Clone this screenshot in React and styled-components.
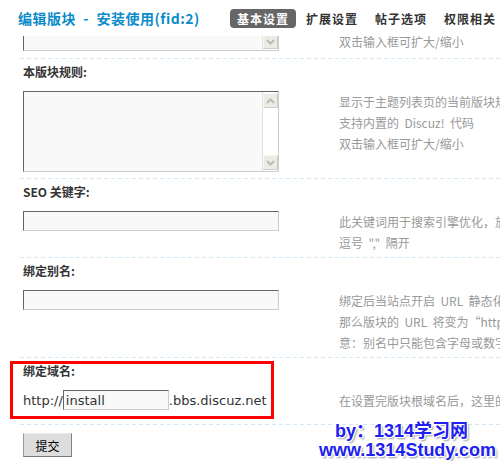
import React from "react";
import styled, { createGlobalStyle } from "styled-components";

const GlobalStyle = createGlobalStyle`
  html, body { margin: 0; padding: 0; background: #fff; overflow: hidden; }
  body {
    font-family: "Noto Sans CJK SC", "DejaVu Sans", sans-serif;
    font-size: 12px;
    color: #333;
  }
`;

const Page = styled.div`
  position: relative;
  width: 500px;
  height: 461px;
  overflow: hidden;
`;

const Header = styled.div`
  display: flex;
  align-items: center;
  height: 36px;
  padding-left: 18px;
`;

const Title = styled.h1`
  margin: 0;
  width: 212px;
  flex: none;
  font-size: 14px;
  line-height: 16px;
  font-weight: bold;
  letter-spacing: 0.5px;
  color: #0b8bca;
  white-space: pre;
`;

const Tabs = styled.nav`
  display: flex;
  gap: 3px;
`;

const Tab = styled.span`
  display: block;
  flex: none;
  width: 66px;
  height: 19px;
  box-sizing: border-box;
  padding-left: 7px;
  line-height: 19px;
  border-radius: 4px;
  font-size: 12px;
  font-weight: bold;
  letter-spacing: 1px;
  white-space: nowrap;
  background: ${(p) => (p.$active ? "#666" : "transparent")};
  color: ${(p) => (p.$active ? "#fff" : "#333")};
`;

const Content = styled.div`
  padding-left: 23px;
`;

const Separator = styled.div`
  height: 1px;
  margin-left: -3px;
  background: repeating-linear-gradient(
    to right,
    #d2e8f6 0 4px,
    transparent 4px 7px
  );
`;

const Row = styled.div`
  display: grid;
  grid-template-columns: 316px auto;
  padding-bottom: ${(p) => p.$pb ?? 4}px;
  margin-top: ${(p) => p.$mt ?? 0}px;
`;

const Clip = styled.div`
  height: 15px;
  overflow: hidden;
  display: flex;
  flex-direction: column;
  justify-content: flex-end;
`;

const Section = styled.div`
  padding-top: 6px;
`;

const Label = styled.div`
  font-weight: bold;
  line-height: 14px;
  margin-bottom: 12px;
  color: #333;
  white-space: nowrap;
`;

const Tip = styled.div`
  color: #999;
  line-height: ${(p) => p.$lh ?? 21}px;
  padding-top: ${(p) => p.$pt ?? 0}px;
  white-space: pre;
`;

const TextBox = styled.div`
  display: flex;
  flex: none;
  width: 256px;
  height: ${(p) => p.$h}px;
  box-sizing: border-box;
  border: 1px solid;
  border-color: #666 #ccc #ccc #666;
  background: #f9f9f9;
  margin-bottom: ${(p) => p.$mb ?? 0}px;
`;

const Area = styled.div`
  flex: 1;
`;

const ScrollTrack = styled.div`
  width: 16px;
  box-sizing: border-box;
  display: flex;
  flex-direction: column;
  justify-content: space-between;
  background: #fff;
  border-left: 1px solid #e2e2da;
  padding: 1px 0;
`;

const ScrollBtn = styled.div`
  height: 15px;
  box-sizing: border-box;
  display: flex;
  align-items: center;
  justify-content: center;
  background: #ecebe4;
  border: 1px solid;
  border-color: #f8f8f4 #cfcec4 #cfcec4 #f8f8f4;
`;

const TextInput = styled.input`
  display: block;
  width: ${(p) => p.$w ?? 256}px;
  height: 20px;
  box-sizing: border-box;
  margin: 0;
  padding: 0 2px;
  border: 1px solid;
  border-color: #666 #ccc #ccc #666;
  background: #f9f9f9;
  font-family: "DejaVu Sans", sans-serif;
  font-size: 13px;
  color: #333;
  outline: none;
`;

const Highlight = styled.div`
  margin-left: -13px;
  width: 264px;
  box-sizing: border-box;
  border: 3px solid #f00;
  padding: 0 0 6px 10px;
`;

const DomainField = styled.div`
  display: flex;
  align-items: center;
  height: 20px;
  font-family: "DejaVu Sans", sans-serif;
  font-size: 13px;
  color: #333;
  white-space: nowrap;
`;

const Submit = styled.button`
  display: block;
  margin: 8px 0 0;
  width: 49px;
  height: 24px;
  padding: 0;
  background: #ddd;
  border: 1px solid;
  border-color: #eaeaea #808080 #777 #999;
  font-family: "Noto Sans CJK SC", sans-serif;
  font-size: 12px;
  color: #000;
`;

const Watermark = styled.div`
  position: absolute;
  left: 319px;
  top: 422px;
  font-family: "Liberation Sans", "Noto Sans CJK SC", sans-serif;
  font-size: 18px;
  line-height: 19px;
  font-weight: bold;
  color: #2020f0;
  white-space: nowrap;
  pointer-events: none;
  text-shadow: 1px 0 #fff, -1px 0 #fff, 0 1px #fff, 0 -1px #fff,
    1px 1px #fff, -1px -1px #fff, 1px -1px #fff, -1px 1px #fff,
    2px 2px 2px #9a9a9a;
`;

const WmLine = styled.div`
  padding-left: ${(p) => p.$indent ?? 0}px;
`;

const Chevron = ({ up }) => (
  <svg width="9" height="6" viewBox="0 0 9 6">
    <path
      d={up ? "M1 5 L4.5 1.5 L8 5" : "M1 1 L4.5 4.5 L8 1"}
      fill="none"
      stroke="#bdbdb4"
      strokeWidth="2"
    />
  </svg>
);

const FakeTextarea = ({ h, mb }) => (
  <TextBox $h={h} $mb={mb}>
    <Area />
    <ScrollTrack>
      <ScrollBtn>
        <Chevron up />
      </ScrollBtn>
      <ScrollBtn>
        <Chevron />
      </ScrollBtn>
    </ScrollTrack>
  </TextBox>
);

export default function App() {
  return (
    <>
      <GlobalStyle />
      <Page>
        <Header>
          <Title>编辑版块  -  安装使用(fid:2)</Title>
          <Tabs>
            <Tab $active>基本设置</Tab>
            <Tab>扩展设置</Tab>
            <Tab>帖子选项</Tab>
            <Tab>权限相关</Tab>
          </Tabs>
        </Header>

        <Content>
          <Row $pb={7}>
            <Clip>
              <FakeTextarea h={81} />
            </Clip>
            <Tip $lh={12}>双击输入框可扩大/缩小</Tip>
          </Row>
          <Separator />

          <Section>
            <Label>本版块规则:</Label>
            <Row>
              <FakeTextarea h={81} mb={2} />
              <Tip>
                {"显示于主题列表页的当前版块规则，留空为不显示\n支持内置的  Discuz!  代码\n双击输入框可扩大/缩小"}
              </Tip>
            </Row>
          </Section>
          <Separator />

          <Section>
            <Label>SEO 关键字:</Label>
            <Row>
              <TextInput readOnly defaultValue="" />
              <Tip>
                {"此关键词用于搜索引擎优化，放在 meta 的 keyword 标签中，多个关键字间请用半角\n逗号  \",\"  隔开"}
              </Tip>
            </Row>
          </Section>
          <Separator />

          <Section>
            <Label>绑定别名:</Label>
            <Row>
              <TextInput readOnly defaultValue="" />
              <Tip>
                {"绑定后当站点开启  URL  静态化后，如果将版块别名设置为“abc”，\n那么版块的  URL  将变为“http://www.abc.com/abc/”，注\n意：别名中只能包含字母或数字，不能全部为数字"}
              </Tip>
            </Row>
          </Section>
          <Separator />

          <Row $mt={3} $pb={5}>
            <Highlight>
              <Label>绑定域名:</Label>
              <DomainField>
                http://
                <TextInput $w={106} readOnly defaultValue="install" />
                .bbs.discuz.net
              </DomainField>
            </Highlight>
            <Tip $pt={29}>在设置完版块根域名后，这里的设置才会生效</Tip>
          </Row>
          <Separator />

          <Submit type="button">提交</Submit>
        </Content>

        <Watermark>
          <WmLine $indent={16}>by：1314学习网</WmLine>
          <WmLine>www.1314Study.com</WmLine>
        </Watermark>
      </Page>
    </>
  );
}
